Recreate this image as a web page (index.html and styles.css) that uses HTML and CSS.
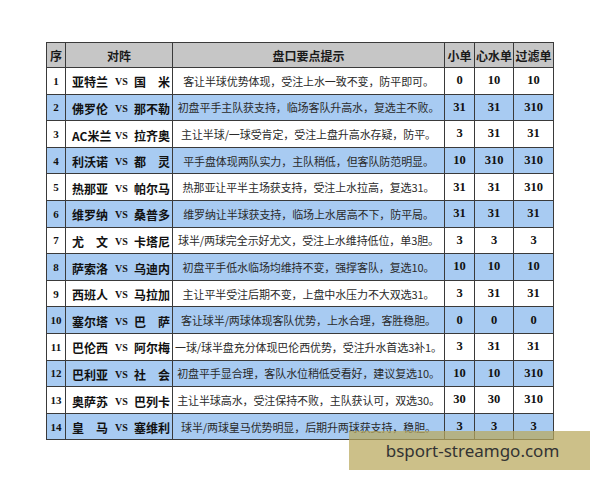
FILE: index.html
```html
<!DOCTYPE html>
<html lang="zh-CN">
<head>
<meta charset="utf-8">
<title>盘口要点提示</title>
<link rel="stylesheet" href="styles.css">
</head>
<body>
<div class="page">
  <table class="tips">
    <colgroup>
      <col class="c-no"><col class="c-team"><col class="c-tip"><col class="c-n1"><col class="c-n2"><col class="c-n3">
    </colgroup>
    <thead>
      <tr><th>序</th><th>对阵</th><th>盘口要点提示</th><th>小单</th><th>心水单</th><th>过滤单</th></tr>
    </thead>
    <tbody>
      <tr><td class="no">1</td><td class="team"><span class="t">亚特兰</span><span class="vs">VS</span><span class="t">国　米</span></td><td class="tip">客让半球优势体现，受注上水一致不变，防平即可。</td><td class="num">0</td><td class="num">10</td><td class="num">10</td></tr>
      <tr class="alt"><td class="no">2</td><td class="team"><span class="t">佛罗伦</span><span class="vs">VS</span><span class="t">那不勒</span></td><td class="tip">初盘平手主队获支持，临场客队升高水，复选主不败。</td><td class="num">31</td><td class="num">31</td><td class="num">310</td></tr>
      <tr><td class="no">3</td><td class="team"><span class="t">AC米兰</span><span class="vs">VS</span><span class="t">拉齐奥</span></td><td class="tip">主让半球/一球受肯定，受注上盘升高水存疑，防平。</td><td class="num">3</td><td class="num">31</td><td class="num">31</td></tr>
      <tr class="alt"><td class="no">4</td><td class="team"><span class="t">利沃诺</span><span class="vs">VS</span><span class="t">都　灵</span></td><td class="tip">平手盘体现两队实力，主队稍低，但客队防范明显。</td><td class="num">10</td><td class="num">310</td><td class="num">310</td></tr>
      <tr><td class="no">5</td><td class="team"><span class="t">热那亚</span><span class="vs">VS</span><span class="t">帕尔马</span></td><td class="tip">热那亚让平半主场获支持，受注上水拉高，复选31。</td><td class="num">31</td><td class="num">31</td><td class="num">310</td></tr>
      <tr class="alt"><td class="no">6</td><td class="team"><span class="t">维罗纳</span><span class="vs">VS</span><span class="t">桑普多</span></td><td class="tip">维罗纳让半球获支持，临场上水居高不下，防平局。</td><td class="num">31</td><td class="num">31</td><td class="num">31</td></tr>
      <tr><td class="no">7</td><td class="team"><span class="t">尤　文</span><span class="vs">VS</span><span class="t">卡塔尼</span></td><td class="tip">球半/两球完全示好尤文，受注上水维持低位，单3胆。</td><td class="num">3</td><td class="num">3</td><td class="num">3</td></tr>
      <tr class="alt"><td class="no">8</td><td class="team"><span class="t">萨索洛</span><span class="vs">VS</span><span class="t">乌迪内</span></td><td class="tip">初盘平手低水临场均维持不变，强撑客队，复选10。</td><td class="num">10</td><td class="num">10</td><td class="num">10</td></tr>
      <tr><td class="no">9</td><td class="team"><span class="t">西班人</span><span class="vs">VS</span><span class="t">马拉加</span></td><td class="tip">主让平半受注后期不变，上盘中水压力不大双选31。</td><td class="num">3</td><td class="num">31</td><td class="num">31</td></tr>
      <tr class="alt"><td class="no">10</td><td class="team"><span class="t">塞尔塔</span><span class="vs">VS</span><span class="t">巴　萨</span></td><td class="tip">客让球半/两球体现客队优势，上水合理，客胜稳胆。</td><td class="num">0</td><td class="num">0</td><td class="num">0</td></tr>
      <tr><td class="no">11</td><td class="team"><span class="t">巴伦西</span><span class="vs">VS</span><span class="t">阿尔梅</span></td><td class="tip">一球/球半盘充分体现巴伦西优势，受注升水首选3补1。</td><td class="num">3</td><td class="num">31</td><td class="num">31</td></tr>
      <tr class="alt"><td class="no">12</td><td class="team"><span class="t">巴利亚</span><span class="vs">VS</span><span class="t">社　会</span></td><td class="tip">初盘平手显合理，客队水位稍低受看好，建议复选10。</td><td class="num">10</td><td class="num">10</td><td class="num">310</td></tr>
      <tr><td class="no">13</td><td class="team"><span class="t">奥萨苏</span><span class="vs">VS</span><span class="t">巴列卡</span></td><td class="tip">主让半球高水，受注保持不败，主队获认可，双选30。</td><td class="num">30</td><td class="num">30</td><td class="num">310</td></tr>
      <tr class="alt"><td class="no">14</td><td class="team"><span class="t">皇　马</span><span class="vs">VS</span><span class="t">塞维利</span></td><td class="tip">球半/两球皇马优势明显，后期升两球获支持，稳胆。</td><td class="num">3</td><td class="num">3</td><td class="num">3</td></tr>
    </tbody>
  </table>
  <div class="watermark">bsport-streamgo.com</div>
</div>
</body>
</html>
```
FILE: styles.css
```css
html, body {
  margin: 0;
  padding: 0;
  background: #ffffff;
}
body {
  width: 600px;
  height: 480px;
  overflow: hidden;
  font-family: "Noto Sans CJK SC", "Liberation Sans", sans-serif;
}
.page {
  position: relative;
  width: 600px;
  height: 480px;
  padding: 42px 0 0 46px;
  box-sizing: border-box;
}
.tips {
  border-collapse: collapse;
  table-layout: fixed;
  width: 507px;
  border: 1px solid #3a3a3a;
}
.c-no { width: 19px; }
.c-team { width: 107px; }
.c-tip { width: 272px; }
.c-n1 { width: 30px; }
.c-n2 { width: 39px; }
.c-n3 { width: 40px; }
.tips th, .tips td {
  border: 1px solid #3a3a3a;
  padding: 0;
  text-align: center;
  vertical-align: middle;
  white-space: nowrap;
  overflow: hidden;
}
.tips thead th {
  height: 24px;
  background: #c6c6c6;
  font-size: 12px;
  font-weight: bold;
  color: #1a1a1a;
}
.tips tbody td {
  height: 25.6px;
  background: #ffffff;
}
.tips tbody tr.alt td {
  background: #a8cbf2;
}
.no {
  font-family: "Liberation Serif", serif;
  font-weight: bold;
  font-size: 11px;
  color: #111;
}
.tips td.team {
  font-size: 12px;
  font-weight: bold;
  color: #111;
  text-align: left;
  padding: 0 0 0 6px;
}
.team .t {
  display: inline-block;
  width: 37px;
  text-align: left;
  vertical-align: middle;
}
.team .vs {
  display: inline-block;
  width: 25px;
  text-align: center;
  font-family: "Liberation Serif", serif;
  font-size: 10px;
  font-weight: bold;
  vertical-align: middle;
}
.tip {
  font-size: 11px;
  letter-spacing: -0.1px;
  color: #2a2a2a;
}
.num {
  font-family: "Liberation Serif", serif;
  font-weight: bold;
  font-size: 12.5px;
  color: #111;
}
.watermark {
  position: absolute;
  left: 349px;
  top: 431px;
  width: 241px;
  height: 39px;
  background: rgba(184, 168, 92, 0.72);
  color: #333333;
  font-family: "Noto Sans", "Liberation Sans", sans-serif;
  font-size: 17px;
  line-height: 39px;
  text-align: center;
  padding-left: 6px;
  box-sizing: border-box;
}
```
